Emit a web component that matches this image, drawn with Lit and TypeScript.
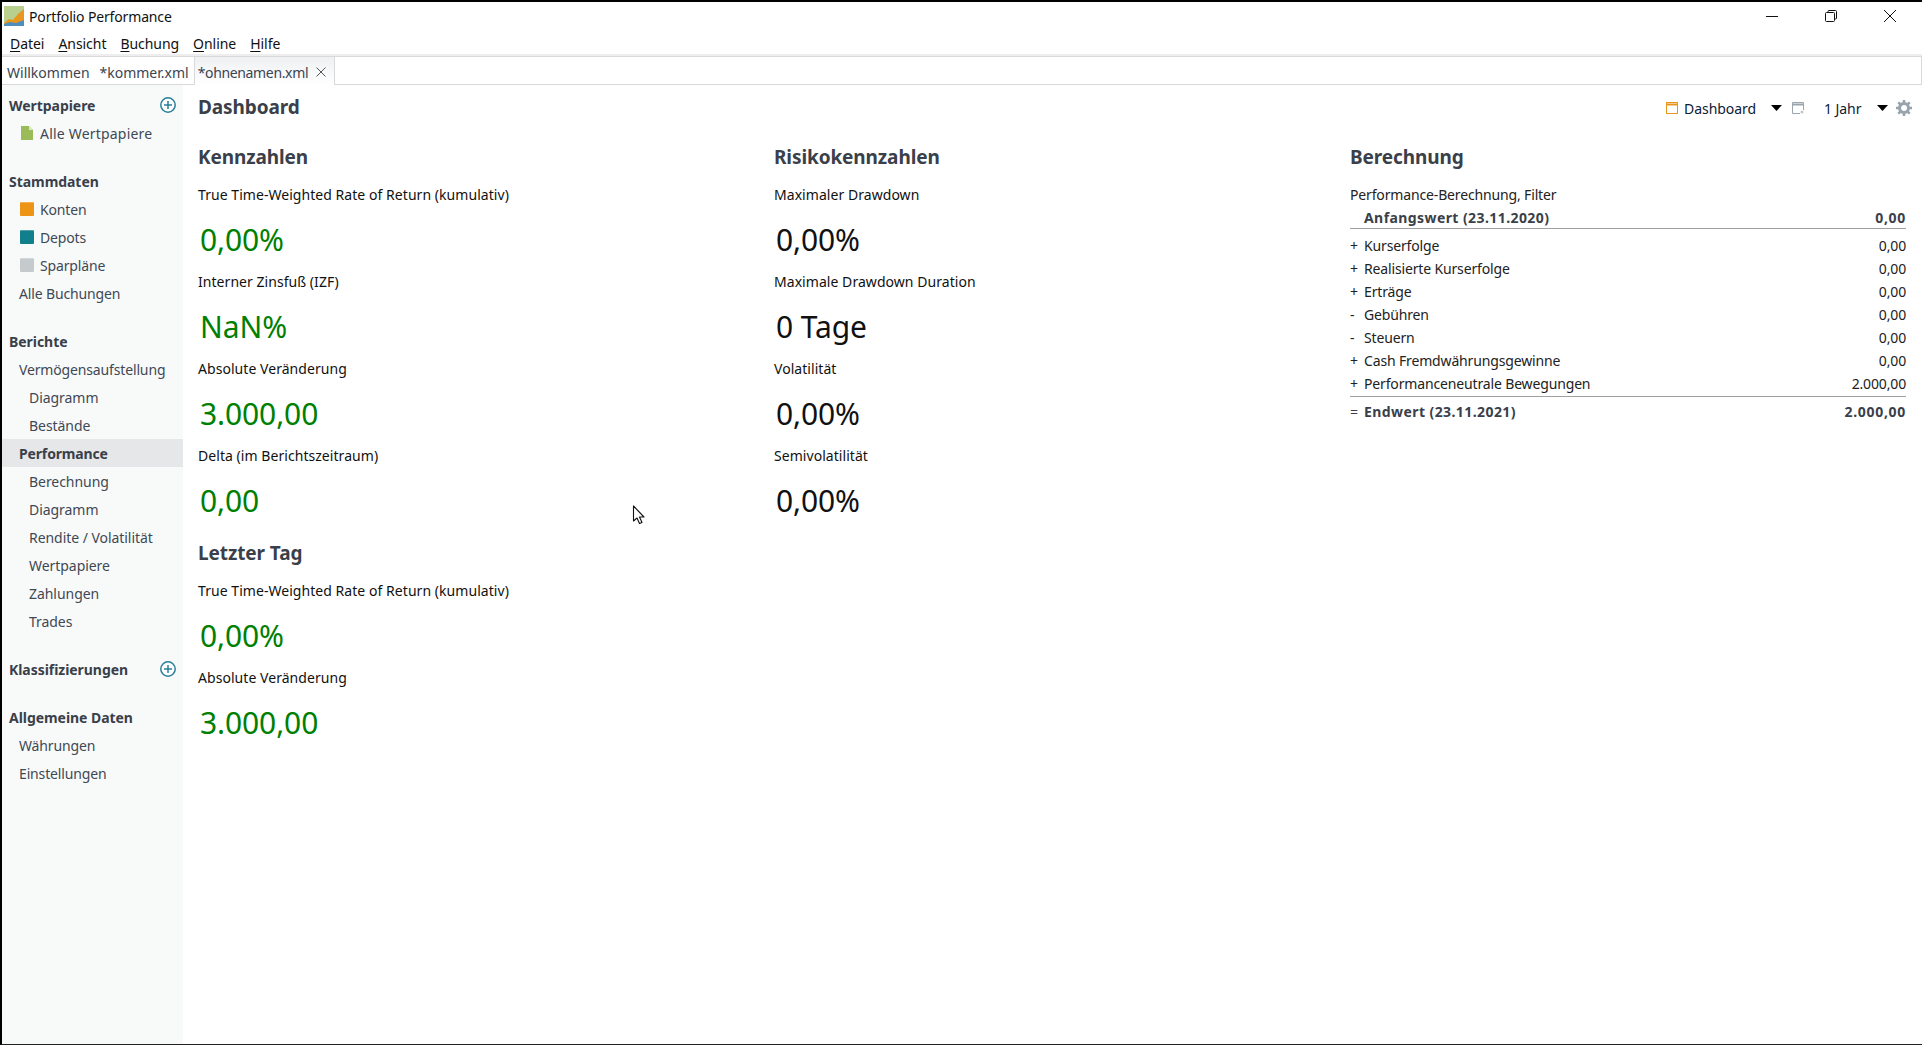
import { LitElement, html, css } from "lit";
import { customElement } from "lit/decorators.js";

const plus = html`<svg class="plus" width="18" height="18" viewBox="0 0 18 18"><circle cx="9" cy="9" r="7.2" fill="#fff" stroke="#2a7f99" stroke-width="1.5"/><path d="M9 5v8M5 9h8" stroke="#2a7f99" stroke-width="1.5"/></svg>`;

const sq = (c: string) => html`<span class="sq" style="background:${c}"></span>`;
const doc = html`<svg class="ic" width="14" height="16" viewBox="0 0 14 16"><path d="M1 1h8l4 4v10H1z" fill="#9bbb59"/><path d="M9 1l4 4H9z" fill="#dfe8c8"/></svg>`;

const metric = (label: string, value: string, cls: string) => html`
  <div class="metric"><div class="label">${label}</div><div class="value ${cls}">${value}</div></div>`;

const row = (sign: string, label: string, value: string) => html`
  <div class="trow"><span class="sign">${sign}</span><span class="tl">${label}</span><span class="tv">${value}</span></div>`;

@customElement("app-root")
export class AppRoot extends LitElement {
  static styles = css`
    :host { display: block; width: 1922px; height: 1045px; box-sizing: border-box; background: #fff; border-top: 2px solid #000; border-left: 2px solid #000; border-bottom: 1px solid #222; position: relative; overflow: hidden; font-family: "Noto Sans", sans-serif; font-size: 14px; letter-spacing: -0.15px; color: #000; }
    .app { display: flex; flex-direction: column; height: 100%; }
    .title { display: flex; align-items: center; height: 28px; flex: none; }
    .title .logo { margin: 0 5px 0 2px; }
    .title .name { flex: 1; color: #111; }
    .wbtns { display: flex; width: 176px; margin-right: 3px; }
    .wbtns span { width: 59px; display: flex; justify-content: center; align-items: center; height: 30px; margin-top: -1px; }
    .menu { display: flex; gap: 14px; height: 24px; padding: 2px 0 0 8px; box-sizing: border-box; align-items: center; flex: none; color: #111; letter-spacing: -0.05px; }
    .menu u { text-underline-offset: 2px; }
    .band { height: 2px; background: #eeeeee; flex: none; }
    .tabs { display: flex; height: 29px; flex: none; border-top: 1px solid #d9d9d9; border-bottom: 1px solid #d9d9d9; border-right: 1px solid #d9d9d9; color: #3b4450; box-sizing: border-box; padding-top: 3px; letter-spacing: 0; }
    .tab { display: flex; align-items: center; padding: 0 0 0 5px; }
    .tab2 { padding-left: 10px; padding-right: 5px; }
    .tab.active { background: linear-gradient(#eef0f2, #ffffff); border-left: 1px solid #d9d9d9; border-right: 1px solid #d9d9d9; padding: 2px 8px 0 3px; gap: 8px; height: 28px; margin-top: -3px; box-sizing: border-box; color: #3b4450; letter-spacing: -0.35px; }
    .body { flex: 1; display: flex; min-height: 0; }
    .side { width: 181px; flex: none; background: #f8fafa; padding-top: 6px; color: #3f4854; box-sizing: border-box; }
    .sec { margin-bottom: 20px; }
    .r { height: 28px; display: flex; align-items: center; padding-left: 17px; white-space: nowrap; }
    .r.h { padding-left: 7px; font-weight: 700; justify-content: space-between; padding-right: 6px; color: #3a3f4a; letter-spacing: -0.05px; }
    .r.sub { padding-left: 27px; letter-spacing: -0.05px; }
    .r.icon { padding-left: 18px; gap: 6px; }
    .r.icon.wide { letter-spacing: 0.2px; }
    .r.sel { background: #e6e7e9; font-weight: 700; color: #3a3f4a; }
    .sq { width: 14px; height: 14px; display: inline-block; border-radius: 1px; box-shadow: inset 0 1px rgba(255,255,255,.25); }
    .main { flex: 1; padding: 8px 16px 0 15px; min-width: 0; }
    .topbar { display: flex; align-items: center; height: 28px; justify-content: space-between; }
    h1 { font-size: 19px; margin: 0; font-weight: 700; color: #3a3f4a; letter-spacing: -0.1px; }
    .tools { display: flex; align-items: center; color: #0d2036; margin-right: -6px; padding-top: 2px; letter-spacing: -0.05px; }
    .tools svg { display: block; }
    .cols { display: grid; grid-template-columns: 576px 576px 1fr; margin-top: 20px; }
    h2 { font-size: 19px; margin: 0; height: 42px; line-height: 32px; font-weight: 700; color: #3a3f4a; letter-spacing: -0.1px; }
    h2.h2b { margin-top: 7px; height: 41px; line-height: 30px; }
    .metric { height: 87px; }
    .label { height: 24px; line-height: 24px; color: #111; letter-spacing: 0.05px; }
    .value { height: 63px; font-size: 30px; line-height: 65px; padding-left: 2px; letter-spacing: -0.1px; box-sizing: border-box; }
    .g { color: #007f00; }
    .k { color: #111; }
    .tbl { color: #222; }
    .tcap { height: 23px; line-height: 24px; }
    .trow { display: flex; height: 23px; align-items: center; }
    .sign { width: 14px; flex: none; }
    .tl { flex: 1; }
    .trow.b { font-weight: 700; color: #3a3f4a; height: 22px; letter-spacing: 0.42px; }
    .trow.b .tv { letter-spacing: 0.7px; }
    .trow.first { border-bottom: 1px solid #a0a0a0; height: 22px; margin-bottom: 5px; }
    .trow.last { border-top: 1px solid #a0a0a0; margin-top: 1px; height: 28px; }
    .cursor { position: absolute; left: 630px; top: 503px; }
  `;

  render() {
    return html`<div class="app">
      <div class="title">
        <svg class="logo" width="20" height="20" viewBox="0 0 20 20"><rect width="20" height="20" fill="#b9cf8e"/><path d="M0 17l5-4 4 1 5-6 6-5v17H0z" fill="#e8961e"/><path d="M0 20v-2l6-2 6 1 8-3v6z" fill="#4f8fc0"/></svg>
        <span class="name">Portfolio Performance</span>
        <div class="wbtns">
          <span><svg width="14" height="14" viewBox="0 0 14 14"><path d="M1 7.500h12" stroke="#111"/></svg></span>
          <span><svg width="14" height="14" viewBox="0 0 14 14" fill="none" stroke="#111"><rect x="1.500" y="3.500" width="9" height="9" rx="1"/><path d="M4 3.500V2.500a1 1 0 0 1 1-1h6.500a1 1 0 0 1 1 1V9a1 1 0 0 1-1 1h-1"/></svg></span>
          <span><svg width="14" height="14" viewBox="0 0 14 14"><path d="M1 1l12 12M13 1L1 13" stroke="#111"/></svg></span>
        </div>
      </div>
      <div class="menu"><span><u>D</u>atei</span><span><u>A</u>nsicht</span><span><u>B</u>uchung</span><span><u>O</u>nline</span><span><u>H</u>ilfe</span></div>
      <div class="band"></div>
      <div class="tabs">
        <div class="tab">Willkommen</div><div class="tab tab2">*kommer.xml</div>
        <div class="tab active">*ohnenamen.xml<svg width="10" height="10" viewBox="0 0 10 10"><path d="M.5.500l9 9M9.500.500l-9 9" stroke="#555"/></svg></div>
      </div>
      <div class="body">
        <div class="side">
          <div class="sec">
            <div class="r h">Wertpapiere ${plus}</div>
            <div class="r icon wide">${doc}Alle Wertpapiere</div>
          </div>
          <div class="sec">
            <div class="r h">Stammdaten</div>
            <div class="r icon">${sq("#ed9416")}Konten</div>
            <div class="r icon">${sq("#127f8c")}Depots</div>
            <div class="r icon">${sq("#c5cacc")}Sparpläne</div>
            <div class="r">Alle Buchungen</div>
          </div>
          <div class="sec">
            <div class="r h">Berichte</div>
            <div class="r">Vermögensaufstellung</div>
            <div class="r sub">Diagramm</div>
            <div class="r sub">Bestände</div>
            <div class="r sel">Performance</div>
            <div class="r sub">Berechnung</div>
            <div class="r sub">Diagramm</div>
            <div class="r sub">Rendite / Volatilität</div>
            <div class="r sub">Wertpapiere</div>
            <div class="r sub">Zahlungen</div>
            <div class="r sub">Trades</div>
          </div>
          <div class="sec"><div class="r h">Klassifizierungen ${plus}</div></div>
          <div class="sec">
            <div class="r h">Allgemeine Daten</div>
            <div class="r">Währungen</div>
            <div class="r">Einstellungen</div>
          </div>
        </div>
        <div class="main">
          <div class="topbar">
            <h1>Dashboard</h1>
            <div class="tools">
              <svg width="12" height="12" viewBox="0 0 12 12" style="margin-right:6px" fill="none" stroke="#e8961e"><rect x=".5" y=".5" width="11" height="11"/><path d="M0 2.500h12" stroke-width="2"/></svg>
              <span style="width:87px">Dashboard</span>
              <svg width="11" height="6" viewBox="0 0 11 6" style="margin-right:10px"><path d="M0 0h11L5.500 6z" fill="#000"/></svg>
              <svg width="12" height="12" viewBox="0 0 12 12" fill="none" stroke="#9aa5ad" style="margin-right:20px"><path d="M8 11.500H.5V.5h11V8"/><path d="M0 2.500h12" stroke-width="2"/><circle cx="10" cy="10" r="1.500" fill="#c0c6ca" stroke="none"/></svg>
              <span style="width:53px">1 Jahr</span>
              <svg width="11" height="6" viewBox="0 0 11 6" style="margin-right:8px"><path d="M0 0h11L5.500 6z" fill="#000"/></svg>
              <svg width="16" height="16" viewBox="0 0 16 16"><circle cx="8" cy="8" r="4.500" fill="none" stroke="#97a4ad" stroke-width="3"/><path d="M8 0v3M8 13v3M0 8h3M13 8h3M2.300 2.300l2.200 2.200M11.500 11.500l2.200 2.200M13.700 2.300l-2.200 2.200M4.500 11.500l-2.200 2.200" stroke="#97a4ad" stroke-width="2.600"/></svg>
            </div>
          </div>
          <div class="cols">
            <div>
              <h2>Kennzahlen</h2>
              ${metric("True Time-Weighted Rate of Return (kumulativ)", "0,00%", "g")}
              ${metric("Interner Zinsfuß (IZF)", "NaN%", "g")}
              ${metric("Absolute Veränderung", "3.000,00", "g")}
              ${metric("Delta (im Berichtszeitraum)", "0,00", "g")}
              <h2 class="h2b">Letzter Tag</h2>
              ${metric("True Time-Weighted Rate of Return (kumulativ)", "0,00%", "g")}
              ${metric("Absolute Veränderung", "3.000,00", "g")}
            </div>
            <div>
              <h2>Risikokennzahlen</h2>
              ${metric("Maximaler Drawdown", "0,00%", "k")}
              ${metric("Maximale Drawdown Duration", "0 Tage", "k")}
              ${metric("Volatilität", "0,00%", "k")}
              ${metric("Semivolatilität", "0,00%", "k")}
            </div>
            <div class="tbl">
              <h2>Berechnung</h2>
              <div class="tcap">Performance-Berechnung, Filter</div>
              <div class="trow b first"><span class="sign"></span><span class="tl">Anfangswert (23.11.2020)</span><span class="tv">0,00</span></div>
              ${row("+", "Kurserfolge", "0,00")}
              ${row("+", "Realisierte Kurserfolge", "0,00")}
              ${row("+", "Erträge", "0,00")}
              ${row("-", "Gebühren", "0,00")}
              ${row("-", "Steuern", "0,00")}
              ${row("+", "Cash Fremdwährungsgewinne", "0,00")}
              ${row("+", "Performanceneutrale Bewegungen", "2.000,00")}
              <div class="trow b last"><span class="sign" style="font-weight:400">=</span><span class="tl">Endwert (23.11.2021)</span><span class="tv">2.000,00</span></div>
            </div>
          </div>
        </div>
      </div>
    </div>
    <svg class="cursor" width="14" height="22" viewBox="0 0 14 22"><path d="M1.500 1v15l3.500-3 2.500 5.500 2.500-1-2.500-5.500h4.500z" fill="#fff" stroke="#111" stroke-width="1.100" stroke-linejoin="round"/></svg>`;
  }
}
